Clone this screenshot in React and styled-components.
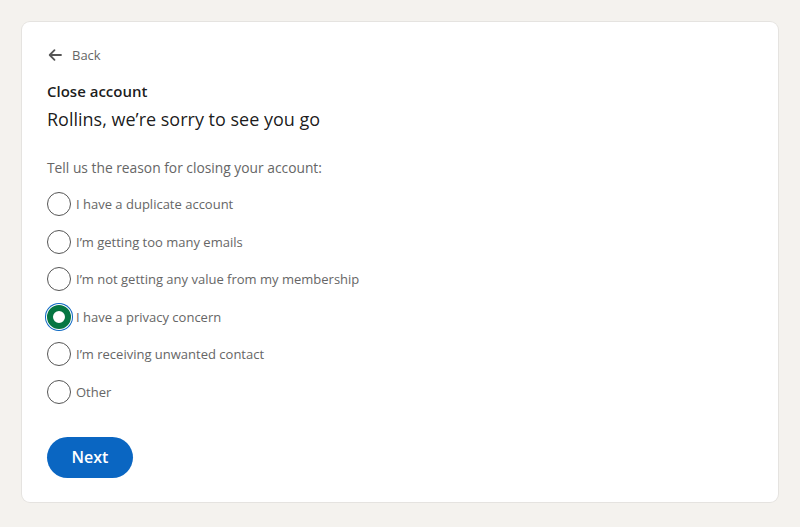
import React, { useState } from "react";
import styled, { createGlobalStyle } from "styled-components";

const GlobalStyle = createGlobalStyle`
  html, body {
    margin: 0;
    padding: 0;
    background: #f4f2ee;
    font-family: "Open Sans", "Noto Sans", sans-serif;
  }
`;

const reasons = [
  "I have a duplicate account",
  "I’m getting too many emails",
  "I’m not getting any value from my membership",
  "I have a privacy concern",
  "I’m receiving unwanted contact",
  "Other",
];

function App() {
  const [picked, setPicked] = useState(3);

  return (
    <Page>
      <GlobalStyle />
      <Card>
        <BackLink>
          <svg width="16" height="16" viewBox="0 0 16 16" fill="none">
            <path d="M14 8H3M7.5 3.2L2.7 8l4.8 4.8" stroke="#555" strokeWidth="1.8" strokeLinecap="round" strokeLinejoin="round" />
          </svg>
          <span>Back</span>
        </BackLink>
        <Heading>Close account</Heading>
        <Subhead>Rollins, we’re sorry to see you go</Subhead>
        <Prompt>Tell us the reason for closing your account:</Prompt>
        <Options>
          {reasons.map((r, i) => (
            <Option key={r} onClick={() => setPicked(i)}>
              <Radio $checked={picked === i} />
              <Label>{r}</Label>
            </Option>
          ))}
        </Options>
        <NextBtn>Next</NextBtn>
      </Card>
    </Page>
  );
}

const Page = styled.div`
  width: 800px;
  height: 527px;
  padding: 22px;
  box-sizing: border-box;
`;

const Card = styled.div`
  background: #fff;
  border-radius: 8px;
  box-shadow: 0 0 0 1px rgba(0, 0, 0, 0.06);
  height: 480px;
  box-sizing: border-box;
  padding: 24px 25px;
  display: flex;
  flex-direction: column;
  align-items: flex-start;
`;

const BackLink = styled.div`
  display: flex;
  align-items: center;
  gap: 9px;
  height: 18px;
  font-size: 13px;
  color: #666;
  margin-bottom: 17px;
`;

const Heading = styled.div`
  font-size: 15px;
  font-weight: 600;
  color: rgba(0, 0, 0, 0.9);
  line-height: 20px;
`;

const Subhead = styled.div`
  font-size: 18px;
  color: rgba(0, 0, 0, 0.9);
  line-height: 26px;
  margin-top: 5px;
`;

const Prompt = styled.div`
  font-size: 13.8px;
  color: #666;
  line-height: 20px;
  margin-top: 26px;
`;

const Options = styled.div`
  display: flex;
  flex-direction: column;
  gap: 13.6px;
  margin-top: 14px;
`;

const Option = styled.label`
  display: flex;
  align-items: center;
  gap: 5px;
  height: 24px;
  cursor: pointer;
`;

const Radio = styled.span`
  width: 24px;
  height: 24px;
  box-sizing: border-box;
  border-radius: 50%;
  border: ${(p) => (p.$checked ? "6px solid #057642" : "1px solid #555")};
  background: #fff;
  box-shadow: ${(p) => (p.$checked ? "0 0 0 1px #fff, 0 0 0 2px #0a66c2" : "none")};
  flex-shrink: 0;
`;

const Label = styled.span`
  font-size: 13px;
  color: #666;
`;

const NextBtn = styled.button`
  margin-top: 33px;
  width: 86px;
  height: 41px;
  border: none;
  border-radius: 21px;
  background: #0a66c2;
  color: #fff;
  font-family: inherit;
  font-size: 16px;
  font-weight: 600;
  cursor: pointer;
`;

export default App;
